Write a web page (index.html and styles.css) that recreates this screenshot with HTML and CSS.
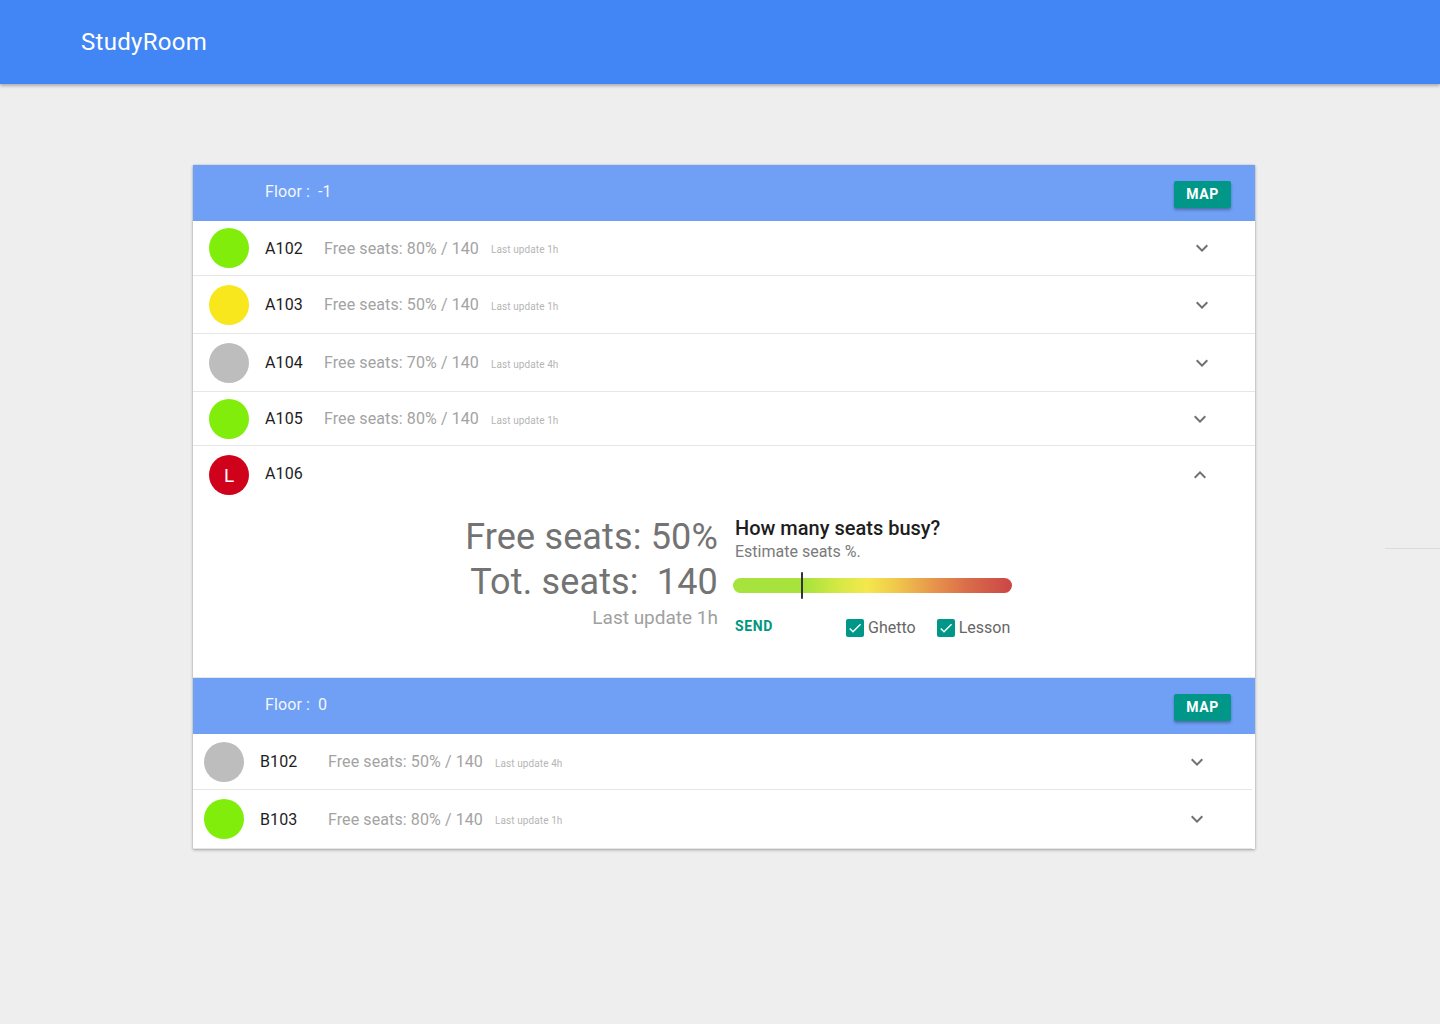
FILE: index.html
```html
<!DOCTYPE html>
<html lang="en">
<head>
<meta charset="utf-8">
<title>StudyRoom</title>
<link rel="stylesheet" href="styles.css">
</head>
<body>
<header class="appbar">
  <h1 class="appbar__title">StudyRoom</h1>
</header>
<main class="page">
  <section class="card">
    <div class="floor">
      <span class="floor__label">Floor :&nbsp; -1</span>
      <button class="btn-map">MAP</button>
    </div>

    <div class="room room--h55">
      <span class="room__dot dot--green"></span>
      <span class="room__name">A102</span>
      <span class="room__free">Free seats: 80% / 140</span>
      <span class="room__update">Last update 1h</span>
      <svg class="room__chev" viewBox="0 0 24 24"><path d="M16.59 8.59L12 13.17 7.41 8.59 6 10l6 6 6-6z"/></svg>
    </div>
    <div class="room room--h58">
      <span class="room__dot dot--yellow"></span>
      <span class="room__name">A103</span>
      <span class="room__free">Free seats: 50% / 140</span>
      <span class="room__update">Last update 1h</span>
      <svg class="room__chev" viewBox="0 0 24 24"><path d="M16.59 8.59L12 13.17 7.41 8.59 6 10l6 6 6-6z"/></svg>
    </div>
    <div class="room room--h58">
      <span class="room__dot dot--gray"></span>
      <span class="room__name">A104</span>
      <span class="room__free">Free seats: 70% / 140</span>
      <span class="room__update">Last update 4h</span>
      <svg class="room__chev" viewBox="0 0 24 24"><path d="M16.59 8.59L12 13.17 7.41 8.59 6 10l6 6 6-6z"/></svg>
    </div>
    <div class="room room--h54 room--chev-shift">
      <span class="room__dot dot--green"></span>
      <span class="room__name">A105</span>
      <span class="room__free">Free seats: 80% / 140</span>
      <span class="room__update">Last update 1h</span>
      <svg class="room__chev" viewBox="0 0 24 24"><path d="M16.59 8.59L12 13.17 7.41 8.59 6 10l6 6 6-6z"/></svg>
    </div>

    <div class="room-open">
      <div class="room room--h58 room--plain room--chev-shift">
        <span class="room__dot dot--red">L</span>
        <span class="room__name room__name--up">A106</span>
        <svg class="room__chev" viewBox="0 0 24 24"><path d="M7.41 15.41L12 10.83l4.59 4.58L18 14l-6-6-6 6z"/></svg>
      </div>
      <div class="detail">
        <div class="detail__stats">
          <div class="detail__big">Free seats: 50%</div>
          <div class="detail__big">Tot. seats:&nbsp; 140</div>
          <div class="detail__upd">Last update 1h</div>
        </div>
        <div class="detail__form">
          <div class="detail__title">How many seats busy?</div>
          <div class="detail__sub">Estimate seats %.</div>
          <div class="slider">
            <span class="slider__thumb"></span>
          </div>
          <div class="detail__actions">
            <button class="btn-send">SEND</button>
            <label class="check">
              <span class="check__box"><svg viewBox="0 0 24 24"><path d="M9 16.17L4.83 12l-1.42 1.41L9 19 21 7l-1.41-1.41z"/></svg></span>
              <span class="check__label">Ghetto</span>
            </label>
            <label class="check">
              <span class="check__box"><svg viewBox="0 0 24 24"><path d="M9 16.17L4.83 12l-1.42 1.41L9 19 21 7l-1.41-1.41z"/></svg></span>
              <span class="check__label">Lesson</span>
            </label>
          </div>
        </div>
      </div>
    </div>

    <div class="floor">
      <span class="floor__label">Floor :&nbsp; 0</span>
      <button class="btn-map">MAP</button>
    </div>

    <div class="room room--h56 room--b">
      <span class="room__dot dot--gray"></span>
      <span class="room__name">B102</span>
      <span class="room__free">Free seats: 50% / 140</span>
      <span class="room__update">Last update 4h</span>
      <svg class="room__chev" viewBox="0 0 24 24"><path d="M16.59 8.59L12 13.17 7.41 8.59 6 10l6 6 6-6z"/></svg>
    </div>
    <div class="room room--h58 room--b">
      <span class="room__dot dot--green"></span>
      <span class="room__name">B103</span>
      <span class="room__free">Free seats: 80% / 140</span>
      <span class="room__update">Last update 1h</span>
      <svg class="room__chev" viewBox="0 0 24 24"><path d="M16.59 8.59L12 13.17 7.41 8.59 6 10l6 6 6-6z"/></svg>
    </div>
  </section>
</main>
<div class="stray-line"></div>
</body>
</html>
```

FILE: styles.css
```css
* { box-sizing: border-box; }

html, body {
  margin: 0;
  padding: 0;
}

body {
  background: #eeeeee;
  font-family: Roboto, "Liberation Sans", Arial, sans-serif;
  min-height: 1024px;
  position: relative;
}

.appbar {
  height: 84px;
  background: #4285f4;
  box-shadow: 0 2px 3px rgba(0, 0, 0, 0.28);
  padding-left: 81px;
  position: relative;
  z-index: 1;
}

.appbar__title {
  margin: 0;
  font-size: 24px;
  font-weight: 400;
  line-height: 84px;
  letter-spacing: 0.3px;
  color: #ffffff;
}

.page {
  padding: 81px 0 60px 193px;
}

.card {
  width: 1062px;
  background: #ffffff;
  box-shadow: 0 1px 3px rgba(0, 0, 0, 0.3), 0 0 1px rgba(0, 0, 0, 0.2);
}

.floor {
  height: 56px;
  background: #6fa0f5;
  display: flex;
  align-items: center;
  justify-content: space-between;
  padding: 0 24px 0 72px;
}

.floor__label {
  color: #f3f6fd;
  font-size: 16px;
  line-height: 20px;
  letter-spacing: 0.1px;
  margin-top: -2px;
}

.btn-map {
  width: 57px;
  height: 27px;
  border: 0;
  border-radius: 2px;
  background: #009688;
  color: #ffffff;
  font-family: Roboto, "Liberation Sans", Arial, sans-serif;
  font-weight: 700;
  font-size: 14px;
  letter-spacing: 0.5px;
  padding: 0;
  box-shadow: 0 2px 3px rgba(0, 0, 0, 0.3);
  margin-top: 2px;
}

.room {
  display: flex;
  align-items: center;
  padding: 0 41px 0 16px;
  border-bottom: 1px solid #e6e6e6;
}

.room--h54 { height: 54px; }
.room--h55 { height: 55px; }
.room--h56 { height: 56px; }
.room--h58 { height: 58px; }

.room--plain { border-bottom: 0; }

.room--chev-shift { padding-right: 43px; }

.room--b {
  padding-left: 11px;
  padding-right: 43px;
  margin-right: 3px;
}

.room--b.room--h58 { height: 59px; }

.room__dot {
  width: 40px;
  height: 40px;
  border-radius: 50%;
  flex: none;
  display: flex;
  align-items: center;
  justify-content: center;
  color: #ffffff;
  font-size: 19px;
}

.dot--green { background: #80ee0a; }
.dot--yellow { background: #f8e71c; }
.dot--gray { background: #bdbdbd; }
.dot--red { background: #d0021b; }

.room__name {
  margin-left: 16px;
  width: 59px;
  font-size: 16px;
  letter-spacing: 0.1px;
  color: #1d1d24;
  flex: none;
}

.room__name--up {
  margin-top: -3px;
}

.room--b .room__name {
  width: 68px;
}

.room__free {
  font-size: 16px;
  letter-spacing: 0.1px;
  color: #a3a3a3;
}

.room__update {
  margin-left: 12px;
  font-size: 10px;
  letter-spacing: 0.1px;
  color: #b5b5b5;
  padding-top: 3px;
}

.room__chev {
  width: 24px;
  height: 24px;
  margin-left: auto;
  fill: #707070;
  flex: none;
}

.detail {
  display: flex;
  align-items: flex-start;
  gap: 15px;
  padding-bottom: 40px;
  border-bottom: 1px solid #e6e6e6;
}

.detail__stats {
  width: 525px;
  text-align: right;
  padding-top: 11px;
}

.detail__big {
  font-size: 36px;
  line-height: 45px;
  letter-spacing: 0.15px;
  color: #737373;
}

.detail__upd {
  font-size: 19px;
  line-height: 24px;
  color: #a0a0a0;
  margin-top: 1px;
}

.detail__form {
  width: 280px;
  padding-top: 12px;
}

.detail__title {
  font-size: 20px;
  font-weight: 500;
  line-height: 24px;
  color: #1d1d1d;
  padding-left: 2px;
}

.detail__sub {
  font-size: 16px;
  line-height: 20px;
  color: #7a7a7a;
  margin-top: 2px;
  padding-left: 2px;
}

.slider {
  position: relative;
  margin-top: 16px;
  height: 15px;
  width: 279px;
  border-radius: 8px;
  background: linear-gradient(to right, #a6e33c 0%, #a8e33c 26%, #d6e845 38%, #f4e84c 48%, #f0c94c 58%, #e6914b 73%, #d86a4a 85%, #cb4646 100%);
}

.slider__thumb {
  position: absolute;
  left: 68px;
  top: -6px;
  width: 2px;
  height: 27px;
  background: #333333;
  border-radius: 1px;
}

.detail__actions {
  display: flex;
  align-items: center;
  margin-top: 25px;
}

.btn-send {
  border: 0;
  background: transparent;
  padding: 0 0 0 2px;
  font-family: Roboto, "Liberation Sans", Arial, sans-serif;
  font-size: 14px;
  font-weight: 700;
  letter-spacing: 0.6px;
  color: #00967f;
  width: 113px;
  text-align: left;
  margin-top: -4px;
}

.check {
  display: flex;
  align-items: center;
  gap: 4px;
}

.check + .check {
  margin-left: 21px;
}

.check__box {
  width: 18px;
  height: 18px;
  border-radius: 2px;
  background: #009688;
  display: flex;
  align-items: center;
  justify-content: center;
}

.check__box svg {
  width: 16px;
  height: 16px;
  fill: #ffffff;
}

.check__label {
  font-size: 16px;
  color: #666666;
}

.stray-line {
  position: absolute;
  left: 1385px;
  top: 548px;
  width: 55px;
  height: 1px;
  background: #dcdcdc;
}
```
